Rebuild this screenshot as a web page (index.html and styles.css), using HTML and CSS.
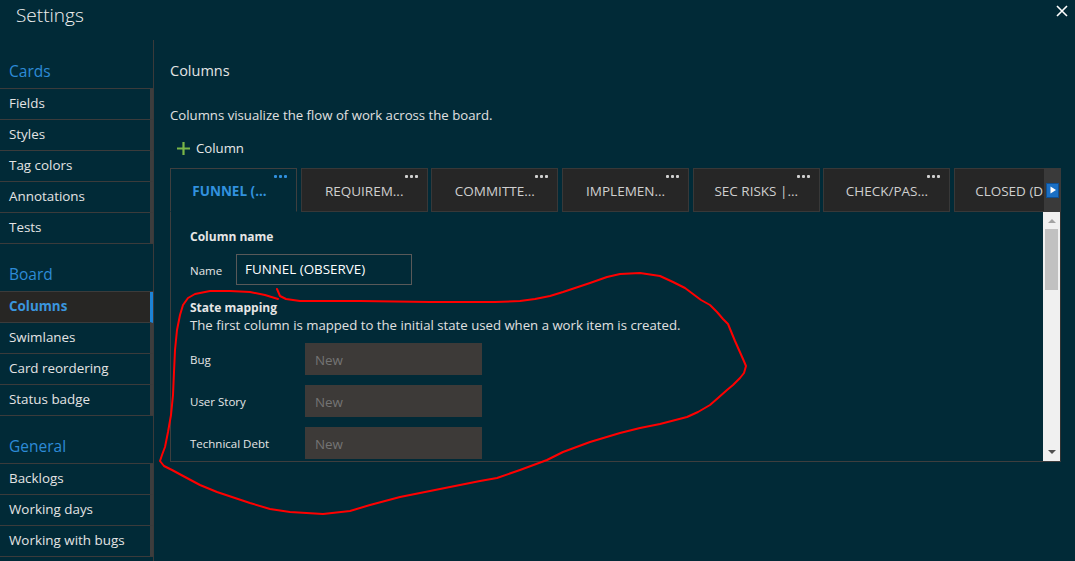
FILE: index.html
```html
<!DOCTYPE html>
<html>
<head>
<meta charset="utf-8">
<link rel="stylesheet" href="styles.css">
</head>
<body>
<div class="dialog">
  <header class="titlebar">
    <h1 class="title">Settings</h1>
    <button class="close" aria-label="Close">
      <svg width="12" height="12" viewBox="0 0 12 12"><path d="M1 1 L11 11 M11 1 L1 11" stroke="#ffffff" stroke-width="1.6"/></svg>
    </button>
  </header>
  <div class="body">
    <nav class="sidebar">
      <div class="group">
        <div class="group-title">Cards</div>
        <ul class="items">
          <li>Fields</li>
          <li>Styles</li>
          <li>Tag colors</li>
          <li>Annotations</li>
          <li>Tests</li>
        </ul>
      </div>
      <div class="group">
        <div class="group-title">Board</div>
        <ul class="items">
          <li class="selected">Columns</li>
          <li>Swimlanes</li>
          <li>Card reordering</li>
          <li>Status badge</li>
        </ul>
      </div>
      <div class="group">
        <div class="group-title">General</div>
        <ul class="items">
          <li>Backlogs</li>
          <li>Working days</li>
          <li>Working with bugs</li>
        </ul>
      </div>
    </nav>
    <main class="main">
      <h2 class="heading">Columns</h2>
      <p class="desc">Columns visualize the flow of work across the board.</p>
      <button class="add">
        <svg width="13" height="13" viewBox="0 0 13 13"><path d="M6.5 0 V13 M0 6.5 H13" stroke="#7ab648" stroke-width="2.2"/></svg>
        <span>Column</span>
      </button>
      <div class="tabbar">
        <div class="tabs">
          <div class="tab active"><span class="dots"><i></i><i></i><i></i></span>FUNNEL (...</div>
          <div class="tab"><span class="dots"><i></i><i></i><i></i></span>REQUIREM...</div>
          <div class="tab"><span class="dots"><i></i><i></i><i></i></span>COMMITTE...</div>
          <div class="tab"><span class="dots"><i></i><i></i><i></i></span>IMPLEMEN...</div>
          <div class="tab"><span class="dots"><i></i><i></i><i></i></span>SEC RISKS |...</div>
          <div class="tab"><span class="dots"><i></i><i></i><i></i></span>CHECK/PAS...</div>
          <div class="tab last">CLOSED (D...</div>
        </div>
        <div class="tabscroll">
          <span class="next"><svg width="8" height="8" viewBox="0 0 8 8"><path d="M1.5 0.5 L7 4 L1.5 7.5 Z" fill="#ffffff"/></svg></span>
        </div>
      </div>
      <div class="panel">
        <div class="panel-content">
          <div class="section-title">Column name</div>
          <div class="name-row">
            <label class="lbl name-lbl">Name</label>
            <div class="input">FUNNEL (OBSERVE)</div>
          </div>
          <div class="section-title sm">State mapping</div>
          <p class="note">The first column is mapped to the initial state used when a work item is created.</p>
          <div class="map-row"><span class="lbl map-lbl">Bug</span><div class="select">New</div></div>
          <div class="map-row"><span class="lbl map-lbl">User Story</span><div class="select">New</div></div>
          <div class="map-row"><span class="lbl map-lbl">Technical Debt</span><div class="select">New</div></div>
        </div>
        <div class="vscroll">
          <span class="arrow up"></span>
          <span class="thumb"></span>
          <span class="arrow down"></span>
        </div>
      </div>
    </main>
  </div>
</div>
<svg class="scribble" width="1075" height="561" viewBox="0 0 1075 561">
  <path d="M277 289 L280 296 L286 299 L300 301 L360 301 L430 302 L495 302 L520 301 L535 299 L550 296 L563 292 L590 283 L607 277 L620 274 L640 273 L660 276 L673 282 L685 288 L693 294 L701 300 L710 305 L717 312 L723 319 L728 324 L735 341 L743 359 L746 366 L744 373 L740 378 L733 385 L727 390 L718 398 L710 405 L698 412 L687 417 L660 424 L640 428 L620 433 L590 442 L563 452 L547 460 L520 470 L497 478 L480 481 L460 485 L440 489 L400 497 L370 505 L350 511 L323 514 L290 512 L270 509 L250 503 L217 492 L200 485 L185 477 L172 470 L164 466 L160 461 L162 455 L165 447 L168 432 L171 415 L173 395 L174 372 L175 350 L177 330 L180 315 L183 305 L188 298 L195 294 L210 291 L230 291 L250 292 L265 295 L278 299" fill="none" stroke="#ff0000" stroke-width="2" stroke-linejoin="round" stroke-linecap="round"/>
</svg>
</body>
</html>
```
FILE: styles.css
```css
* { box-sizing: border-box; }
html, body { margin: 0; padding: 0; }
body {
  width: 1075px;
  height: 561px;
  overflow: hidden;
  background: #012a37;
  color: #e2e2e2;
  font-family: "Open Sans", "Noto Sans", sans-serif;
  font-size: 13.2px;
  position: relative;
}
.dialog { display: flex; flex-direction: column; height: 561px; }
.titlebar {
  height: 40px;
  display: flex;
  justify-content: space-between;
  align-items: flex-start;
}
.title {
  margin: 0;
  padding: 1px 0 0 16px;
  font-size: 19px;
  font-weight: 300;
  line-height: 28px;
  color: #f2f2f2;
}
.close {
  background: none;
  border: 0;
  padding: 0;
  margin: 5px 7px 0 0;
  width: 12px;
  height: 12px;
  display: flex;
}
.body { display: flex; flex: 1; min-height: 0; }

.sidebar {
  flex: 0 0 154px;
  width: 154px;
  border-right: 1px solid #3a3a3a;
}
.group-title {
  margin-top: 15px;
  height: 32px;
  line-height: 31px;
  padding-left: 9px;
  font-size: 15.5px;
  color: #2d8bd6;
}
.group:first-child .group-title { margin-top: 16px; }
.items {
  list-style: none;
  margin: 0;
  padding: 0;
  width: 153px;
  border-top: 1px solid #3b3b3b;
}
.items li {
  height: 31px;
  line-height: 29px;
  padding-left: 9px;
  border-bottom: 1px solid #3b3b3b;
  border-right: 3px solid #3d3d3d;
  color: #e4e4e4;
  font-size: 13.4px;
  white-space: nowrap;
}
.items li.selected {
  background: #272624;
  color: #3a95de;
  font-weight: bold;
  border-right-color: #1d84d6;
}

.main { flex: 1; min-width: 0; padding: 21px 14px 0 16px; }
.heading {
  margin: 0;
  font-size: 14.5px;
  font-weight: normal;
  line-height: 20px;
  color: #e4e4e4;
}
.desc {
  margin: 25px 0 0;
  line-height: 18px;
  color: #e0e0e0;
}
.add {
  margin: 14px 0 0 7px;
  padding: 0;
  height: 20px;
  border: 0;
  background: none;
  display: flex;
  align-items: center;
  gap: 6px;
  color: #e8e8e8;
  font: inherit;
  font-size: 13.2px;
}
.tabbar {
  margin-top: 10px;
  height: 44px;
  display: flex;
}
.tabs {
  flex: 1;
  min-width: 0;
  display: flex;
  gap: 3.7px;
  overflow: hidden;
}
.tab {
  flex: 0 0 127px;
  height: 44px;
  position: relative;
  background: #262626;
  border: 1px solid #383838;
  display: flex;
  align-items: center;
  justify-content: center;
  color: #cfcfcf;
  font-size: 13.5px;
  padding-top: 2px;
  white-space: nowrap;
}
.tab.active {
  background: #012a37;
  border-color: #3f3f3f;
  border-bottom-color: #012a37;
  color: #3191de;
  font-weight: bold;
  padding-right: 8px;
}
.tab.last { justify-content: flex-start; padding-left: 20px; }
.dots {
  position: absolute;
  top: 6px;
  right: 9px;
  display: flex;
  gap: 2px;
}
.dots i {
  width: 3px;
  height: 2.5px;
  border-radius: 1px;
  background: #d0d0d0;
  display: block;
}
.tab.active .dots i { background: #2f8fdc; }
.tabscroll {
  flex: 0 0 17px;
  height: 44px;
  background: #3a3a3a;
  display: flex;
  align-items: center;
  justify-content: center;
}
.next {
  width: 13px;
  height: 15px;
  background: #1a6fc4;
  border: 1px solid #0d4f94;
  display: flex;
  align-items: center;
  justify-content: center;
}
.panel {
  height: 250px;
  border-left: 1px solid #3e3e3e;
  border-bottom: 1px solid #3e3e3e;
  display: flex;
  position: relative;
}
.panel-content {
  flex: 1;
  min-width: 0;
  overflow: hidden;
  padding: 16px 0 0 19px;
}
.section-title {
  font-weight: bold;
  font-size: 12px;
  line-height: 17px;
  color: #e6e6e6;
}
.section-title.sm { margin-top: 14px; }
.name-row {
  margin-top: 9px;
  display: flex;
  align-items: center;
}
.lbl { font-size: 11.5px; color: #e6e6e6; }
.name-lbl { width: 46px; padding-top: 2px; }
.input {
  width: 176px;
  height: 31px;
  border: 1px solid #595959;
  padding-left: 8px;
  line-height: 29px;
  color: #ffffff;
  font-size: 13.4px;
}
.note {
  margin: 0;
  line-height: 18px;
  color: #e0e0e0;
}
.map-row {
  display: flex;
  align-items: center;
  margin-top: 10px;
}
.note + .map-row { margin-top: 9px; }
.map-lbl { width: 115px; }
.select {
  width: 177px;
  height: 32px;
  background: #3d3a38;
  padding-left: 10px;
  line-height: 35px;
  color: #747474;
  font-size: 13.4px;
}
.vscroll {
  flex: 0 0 18px;
  width: 18px;
  background: #f0f0f0;
  border-right: 1px solid #333;
  position: relative;
}
.thumb {
  position: absolute;
  left: 2px;
  top: 17px;
  width: 13px;
  height: 61px;
  background: #c1c1c1;
}
.arrow {
  position: absolute;
  left: 5px;
  width: 0;
  height: 0;
  border-left: 4px solid transparent;
  border-right: 4px solid transparent;
}
.arrow.up { top: 7px; border-bottom: 4px solid #a3a3a3; }
.arrow.down { bottom: 7px; border-top: 4px solid #505050; }
.scribble {
  position: absolute;
  left: 0;
  top: 0;
  pointer-events: none;
}
```
